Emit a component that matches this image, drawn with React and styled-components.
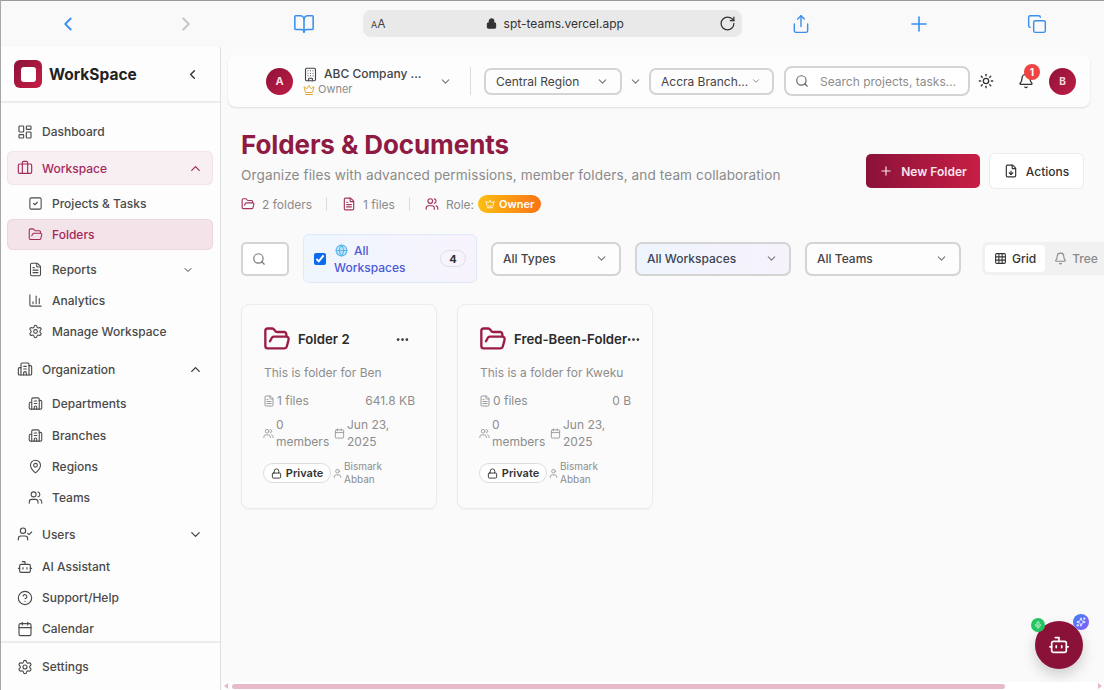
import React from 'react';
import styled, { createGlobalStyle } from 'styled-components';
import {
  Bell, BookOpen, Bot, Briefcase, Building, Building2, Calendar, ChartColumn, ChevronDown, ChevronLeft,
  ChevronRight, ChevronUp, CircleHelp, Copy, Crown, Ellipsis, FileDown, FileText, FolderOpen, Globe,
  Grid3x3, LayoutDashboard, Lock, MapPin, Mic, Plus, RotateCw, Search, Settings, Share, Sparkles, SquareCheck,
  Sun, User, UserCheck, Users,
} from 'lucide-react';

const Global = createGlobalStyle`
  * { box-sizing: border-box; }
  html, body { margin: 0; padding: 0; height: 100%; overflow: hidden; }
  body { font-family: Inter, "Liberation Sans", sans-serif; background: #fafafa; color: #333; }
`;

const Page = styled.div`
  position: relative;
  width: 1104px;
  height: 690px;
  display: flex;
  flex-direction: column;
  overflow: hidden;
  border-left: 1px solid #a8a8a8;
`;

const BrowserBar = styled.div`
  height: 47px;
  flex: none;
  display: grid;
  grid-template-columns: 118px 118px 118px 379px 118px 118px 118px;
  align-items: center;
  padding-left: 8px;
  background: #f9f9f9;
  border-top: 1px solid #9a9a9a;
`;

const BarSlot = styled.div`
  display: flex;
  justify-content: center;
  color: ${({ $off }) => ($off ? '#c4c4c4' : '#3a8fee')};
`;

const UrlBar = styled.div`
  height: 27px;
  margin-top: -1px;
  display: flex;
  align-items: center;
  justify-content: space-between;
  padding: 0 6px 0 8px;
  background: #e9e9e9;
  border-radius: 8px;
  font-size: 12px;
  color: #333;
`;

const AaText = styled.span`
  font-size: 12px;
  color: #444;
  & small { font-size: 9px; }
`;

const UrlText = styled.span`
  display: flex;
  align-items: center;
  gap: 7px;
  margin-left: 5px;
`;

const Body = styled.div`
  flex: 1;
  display: flex;
  min-height: 0;
`;

const Sidebar = styled.aside`
  width: 220px;
  flex: none;
  display: flex;
  flex-direction: column;
  background: #fdfdfd;
  border-right: 1px solid #dedede;
`;

const Brand = styled.div`
  height: 56px;
  flex: none;
  display: flex;
  align-items: center;
  padding: 0 20px 0 13px;
  border-bottom: 2px solid #ececec;
`;

const LogoMark = styled.div`
  width: 28px;
  height: 28px;
  flex: none;
  display: flex;
  align-items: center;
  justify-content: center;
  border-radius: 6px;
  background: linear-gradient(135deg, #8a1239, #c81e45);
  &::after {
    content: '';
    width: 15px;
    height: 15px;
    border-radius: 3px;
    background: #fff;
  }
`;

const BrandName = styled.div`
  flex: 1;
  margin-left: 7px;
  font-size: 15.5px;
  font-weight: 700;
  color: #222;
`;

const Nav = styled.nav`
  flex: 1;
  min-height: 0;
  overflow: hidden;
  padding: 13px 7px 0 6px;
  display: flex;
  flex-direction: column;
`;

const Item = styled.div`
  flex: none;
  display: flex;
  align-items: center;
  gap: 9px;
  height: ${({ $tall }) => ($tall ? '34px' : '31px')};
  margin-top: ${({ $mt }) => $mt || 0}px;
  padding-left: ${({ $sub }) => ($sub ? '21px' : '10px')};
  padding-right: ${({ $sub }) => ($sub ? '19px' : '10px')};
  border-radius: 6px;
  font-size: 12px;
  font-weight: 500;
  color: ${({ $active, $open }) => ($active || $open ? '#a5285a' : '#4a4a4a')};
  background: ${({ $active, $open }) => ($active ? '#f3e4e9' : $open ? '#f8eff2' : 'transparent')};
  box-shadow: ${({ $active, $open }) => ($active ? 'inset 0 0 0 1px #eed5dd' : $open ? 'inset 0 0 0 1px #f3e3e8' : 'none')};
  & > span { flex: 1; }
`;

const SidebarFooter = styled.div`
  height: 49px;
  flex: none;
  display: flex;
  align-items: center;
  padding-left: 6px;
  border-top: 2px solid #ececec;
`;

const Main = styled.main`
  flex: 1;
  min-width: 0;
  display: flex;
  flex-direction: column;
  background: #fafafa;
  padding: 8px 0 0 7px;
`;

const TopBar = styled.header`
  width: 862px;
  height: 52px;
  flex: none;
  display: flex;
  align-items: center;
  padding-left: 38px;
  background: #fdfdfd;
  border-radius: 8px;
  box-shadow: 0 1px 2px rgba(0, 0, 0, 0.12);
`;

const Avatar = styled.div`
  width: 27px;
  height: 27px;
  flex: none;
  display: flex;
  align-items: center;
  justify-content: center;
  border-radius: 50%;
  background: linear-gradient(135deg, #8f1239, #be1e45);
  color: #f6dbe3;
  font-size: ${({ $small }) => ($small ? '10px' : '11px')};
  font-weight: 700;
`;

const Company = styled.div`
  width: 136px;
  margin-left: 10px;
  flex: none;
`;

const CompanyName = styled.div`
  display: flex;
  align-items: center;
  gap: 6px;
  font-size: 12px;
  font-weight: 500;
  color: #444;
  line-height: 16px;
`;

const CompanyRole = styled.div`
  display: flex;
  align-items: center;
  gap: 3px;
  margin-top: 1px;
  font-size: 11px;
  color: #8b8b8b;
  line-height: 13px;
`;

const Divider = styled.div`
  width: 1px;
  height: 28px;
  margin: 0 13px 0 18px;
  background: #dcdcdc;
`;

const Select = styled.div`
  width: ${({ $w }) => $w}px;
  height: ${({ $h }) => $h || 27}px;
  flex: none;
  display: flex;
  align-items: center;
  justify-content: space-between;
  padding: 0 11px 0 10px;
  background: ${({ $tint }) => ($tint ? 'linear-gradient(90deg, #eff5fd, #f6f2fc)' : '#fdfdfd')};
  border: 2px solid #d4d4d4;
  border-radius: 7px;
  font-size: 12px;
  font-weight: ${({ $fw }) => $fw || 400};
  color: ${({ $tint }) => ($tint ? '#3a4454' : '#444')};
  white-space: nowrap;
`;

const LooseChevron = styled.div`
  width: 27px;
  flex: none;
  display: flex;
  justify-content: center;
  color: #777;
`;

const SearchBox = styled.div`
  width: 186px;
  height: 30px;
  margin-left: 10px;
  flex: none;
  display: flex;
  align-items: center;
  gap: 11px;
  padding-left: 9px;
  background: #fff;
  border: 2px solid #d4d4d4;
  border-radius: 8px;
  font-size: 12px;
  color: #8d8d8d;
  white-space: nowrap;
`;

const IconSlot = styled.div`
  position: relative;
  width: ${({ $w }) => $w}px;
  flex: none;
  display: flex;
  justify-content: center;
  color: #333;
`;

const RedBadge = styled.div`
  position: absolute;
  top: -9px;
  left: 22px;
  width: 16px;
  height: 16px;
  display: flex;
  align-items: center;
  justify-content: center;
  border-radius: 50%;
  background: #ef4444;
  color: #fff;
  font-size: 10px;
  font-weight: 700;
`;

const Content = styled.div`
  padding: 22px 0 0 13px;
`;

const HeadRow = styled.div`
  display: flex;
`;

const HeadText = styled.div`
  width: 625px;
  flex: none;
`;

const Title = styled.h1`
  margin: 0;
  font-size: 26px;
  line-height: 32px;
  font-weight: 700;
  color: #8f1a42;
  letter-spacing: -0.1px;
`;

const Subtitle = styled.p`
  margin: 4px 0 0;
  font-size: 13.6px;
  line-height: 20px;
  color: #8a8a8a;
  letter-spacing: 0.1px;
`;

const Meta = styled.div`
  display: flex;
  align-items: center;
  margin-top: 9px;
  height: 20px;
  font-size: 12px;
  color: #8a8a8a;
`;

const MetaItem = styled.div`
  display: flex;
  align-items: center;
  gap: 7px;
  color: #8a8a8a;
  & svg { color: #a5355f; }
`;

const MetaSep = styled.div`
  width: 1px;
  height: 14px;
  margin: 0 15px 0 14px;
  background: #dedede;
`;

const OwnerPill = styled.div`
  height: 18px;
  margin-left: 4px;
  display: flex;
  align-items: center;
  gap: 4px;
  padding: 0 7px;
  border-radius: 9px;
  background: linear-gradient(90deg, #fbbf12, #f97316);
  color: #fff;
  font-size: 11px;
  font-weight: 600;
`;

const HeadButtons = styled.div`
  display: flex;
  gap: 10px;
  margin-top: 25px;
`;

const PrimaryButton = styled.div`
  width: 114px;
  height: 34px;
  display: flex;
  align-items: center;
  justify-content: center;
  gap: 8px;
  border-radius: 5px;
  background: linear-gradient(90deg, #8a1239, #c81e45);
  color: #f8e6ec;
  font-size: 12px;
  font-weight: 600;
`;

const GhostButton = styled.div`
  width: 93px;
  height: 34px;
  display: flex;
  align-items: center;
  justify-content: center;
  gap: 8px;
  border-radius: 5px;
  background: #fff;
  box-shadow: 0 0 0 1px #ececec;
  color: #333;
  font-size: 12px;
  font-weight: 500;
`;

const Filters = styled.div`
  display: flex;
  align-items: center;
  margin-top: 20px;
  height: 49px;
`;

const SearchSquare = styled.div`
  width: 48px;
  height: 34px;
  flex: none;
  display: flex;
  align-items: center;
  padding-left: 9px;
  background: #fff;
  border: 2px solid #d4d4d4;
  border-radius: 5px;
  color: #777;
`;

const WorkspaceChip = styled.div`
  width: 174px;
  height: 49px;
  margin: 0 14px;
  flex: none;
  display: flex;
  align-items: center;
  padding: 0 10px;
  background: linear-gradient(90deg, #eff6fe, #f7f3fd);
  border: 1px solid #dde9fb;
  border-radius: 6px;
`;

const CheckBox = styled.input`
  width: 12px;
  height: 12px;
  margin: 0 8px 0 0;
  flex: none;
  accent-color: #0b6bef;
`;

const ChipLabel = styled.div`
  flex: 1;
  font-size: 12px;
  line-height: 17px;
  font-weight: 500;
  color: #4c58d8;
  & svg { color: #5ab6ee; fill: #bfe3f8; vertical-align: -2px; margin: 0 6px 0 1px; }
`;

const CountPill = styled.div`
  width: 26px;
  height: 17px;
  display: flex;
  align-items: center;
  justify-content: center;
  border: 1px solid #dedede;
  border-radius: 9px;
  font-size: 11px;
  font-weight: 700;
  color: #333;
`;

const SelectRow = styled.div`
  display: flex;
  gap: 14px;
`;

const ViewToggle = styled.div`
  display: flex;
  align-items: center;
  flex: none;
  width: 160px;
  height: 33px;
  margin-left: 21px;
  padding: 3px;
  background: #f1f1f1;
  border-radius: 6px;
`;

const ViewTab = styled.div`
  height: 27px;
  display: flex;
  align-items: center;
  gap: 5px;
  padding: 0 9px;
  border-radius: 4px;
  background: ${({ $on }) => ($on ? '#fff' : 'transparent')};
  color: ${({ $on }) => ($on ? '#333' : '#8a8a8a')};
  font-size: 12px;
  font-weight: 500;
`;

const Cards = styled.div`
  display: flex;
  gap: 20px;
  margin-top: 21px;
`;

const Card = styled.article`
  width: 196px;
  height: 205px;
  flex: none;
  padding: 21px 0 0 21px;
  background: #fbfbfb;
  border: 1px solid #ececec;
  border-radius: 8px;
  box-shadow: 0 1px 2px rgba(0, 0, 0, 0.04);
`;

const CardHead = styled.div`
  display: flex;
  align-items: center;
  height: 26px;
  color: #9c1c49;
`;

const CardTitle = styled.div`
  width: ${({ $w }) => $w}px;
  margin-left: 7px;
  flex: none;
  font-size: 13.2px;
  font-weight: 600;
  color: #2a2a2a;
  white-space: nowrap;
`;

const Dots = styled.div`
  color: #333;
  display: flex;
`;

const Desc = styled.div`
  margin-top: 13px;
  margin-left: 1px;
  font-size: 12px;
  line-height: 16px;
  color: #8d8d8d;
`;

const StatRow = styled.div`
  display: flex;
  align-items: center;
  justify-content: space-between;
  width: 152px;
  margin-top: 12px;
  font-size: 12px;
  line-height: 16px;
  color: #8d8d8d;
`;

const StatGroup = styled.div`
  display: flex;
  align-items: center;
  gap: 2px;
  & svg { color: #9a9a9a; flex: none; }
`;

const DetailRow = styled.div`
  display: flex;
  align-items: center;
  margin-top: 7px;
  font-size: 12px;
  line-height: 17px;
  color: #8d8d8d;
`;

const DetailBlock = styled.div`
  display: flex;
  align-items: center;
  gap: 2px;
  width: ${({ $w }) => $w}px;
  flex: none;
  & svg { color: #9a9a9a; flex: none; }
`;

const OwnerRow = styled.div`
  display: flex;
  align-items: center;
  margin-top: 10px;
`;

const PrivatePill = styled.div`
  width: 68px;
  height: 20px;
  flex: none;
  display: flex;
  align-items: center;
  justify-content: center;
  gap: 4px;
  background: #fff;
  border: 1px solid #dcdcdc;
  border-radius: 10px;
  font-size: 11px;
  font-weight: 600;
  color: #333;
`;

const CardOwner = styled.div`
  display: flex;
  align-items: center;
  gap: 1px;
  margin-left: 1px;
  font-size: 10px;
  line-height: 13px;
  color: #8d8d8d;
  & svg { color: #9a9a9a; flex: none; }
`;

const Fab = styled.div`
  position: absolute;
  right: 21px;
  bottom: 21px;
  width: 48px;
  height: 48px;
  display: flex;
  align-items: center;
  justify-content: center;
  border-radius: 50%;
  background: #8a1239;
  color: #fff;
  box-shadow: 0 6px 14px rgba(0, 0, 0, 0.18);
`;

const FabDot = styled.div`
  position: absolute;
  top: ${({ $top }) => $top}px;
  left: ${({ $left }) => $left}px;
  width: ${({ $size }) => $size}px;
  height: ${({ $size }) => $size}px;
  display: flex;
  align-items: center;
  justify-content: center;
  border-radius: 50%;
  background: ${({ $bg }) => $bg};
  color: #fff;
`;

const ScrollTrack = styled.div`
  position: absolute;
  left: 221px;
  right: 0;
  bottom: 0;
  height: 8px;
  display: flex;
  align-items: center;
  justify-content: space-between;
  padding: 0 2px;
  background: #fff;
`;

const ScrollThumb = styled.div`
  position: absolute;
  left: 10px;
  width: 773px;
  height: 5px;
  border-radius: 3px;
  background: #e8b9c7;
`;

const Arrow = styled.div`
  width: 0;
  height: 0;
  border-top: 3px solid transparent;
  border-bottom: 3px solid transparent;
  ${({ $right }) => ($right ? 'border-left: 4px solid #e8b9c7;' : 'border-right: 4px solid #e8b9c7;')}
`;

const nav = [
  { label: 'Dashboard', icon: LayoutDashboard, mt: 0 },
  { label: 'Workspace', icon: Briefcase, tall: true, open: true, mt: 4, chevron: 'up' },
  { label: 'Projects & Tasks', icon: SquareCheck, sub: true, mt: 3 },
  { label: 'Folders', icon: FolderOpen, sub: true, active: true },
  { label: 'Reports', icon: FileText, sub: true, mt: 4, chevron: 'down' },
  { label: 'Analytics', icon: ChartColumn, sub: true },
  { label: 'Manage Workspace', icon: Settings, sub: true },
  { label: 'Organization', icon: Building2, tall: true, mt: 5, chevron: 'up' },
  { label: 'Departments', icon: Building2, sub: true, mt: 2 },
  { label: 'Branches', icon: Building2, sub: true, mt: 1 },
  { label: 'Regions', icon: MapPin, sub: true },
  { label: 'Teams', icon: Users, sub: true },
  { label: 'Users', icon: UserCheck, tall: true, mt: 4, chevron: 'down' },
  { label: 'AI Assistant', icon: Bot },
  { label: 'Support/Help', icon: CircleHelp },
  { label: 'Calendar', icon: Calendar },
];

const folders = [
  { name: 'Folder 2', desc: 'This is folder for Ben', files: '1 files', size: '641.8 KB', titleW: 97 },
  { name: 'Fred-Been-Folder', desc: 'This is a folder for Kweku', files: '0 files', size: '0 B', titleW: 112 },
];

function FolderCard({ folder }) {
  return (
    <Card>
      <CardHead>
        <FolderOpen size={28} strokeWidth={2} />
        <CardTitle $w={folder.titleW}>{folder.name}</CardTitle>
        <Dots><Ellipsis size={15} strokeWidth={2.4} /></Dots>
      </CardHead>
      <Desc>{folder.desc}</Desc>
      <StatRow>
        <StatGroup><FileText size={12} />{folder.files}</StatGroup>
        <span>{folder.size}</span>
      </StatRow>
      <DetailRow>
        <DetailBlock $w={71}><Users size={11} /><span>0<br />members</span></DetailBlock>
        <DetailBlock $w={80}><Calendar size={11} /><span>Jun 23,<br />2025</span></DetailBlock>
      </DetailRow>
      <OwnerRow>
        <PrivatePill><Lock size={11} />Private</PrivatePill>
        <CardOwner><User size={11} /><span>Bismark<br />Abban</span></CardOwner>
      </OwnerRow>
    </Card>
  );
}

export default function App() {
  return (
    <>
      <Global />
      <Page>
        <BrowserBar>
          <BarSlot><ChevronLeft size={22} strokeWidth={2} /></BarSlot>
          <BarSlot $off><ChevronRight size={22} strokeWidth={2} /></BarSlot>
          <BarSlot><BookOpen size={22} strokeWidth={1.7} /></BarSlot>
          <UrlBar>
            <AaText><small>A</small>A</AaText>
            <UrlText><Lock size={11} strokeWidth={2.4} fill="currentColor" />spt-teams.vercel.app</UrlText>
            <RotateCw size={17} strokeWidth={1.8} />
          </UrlBar>
          <BarSlot><Share size={20} strokeWidth={1.7} /></BarSlot>
          <BarSlot><Plus size={24} strokeWidth={1.6} /></BarSlot>
          <BarSlot><Copy size={20} strokeWidth={1.7} /></BarSlot>
        </BrowserBar>
        <Body>
          <Sidebar>
            <Brand>
              <LogoMark />
              <BrandName>WorkSpace</BrandName>
              <ChevronLeft size={15} color="#333" strokeWidth={2.2} />
            </Brand>
            <Nav>
              {nav.map(({ label, icon: Icon, chevron, sub, tall, open, active, mt }) => (
                <Item key={label} $sub={sub} $tall={tall} $open={open} $active={active} $mt={mt}>
                  <Icon size={sub ? 15 : 16} strokeWidth={1.7} />
                  <span>{label}</span>
                  {chevron === 'up' && <ChevronUp size={sub ? 12 : 15} strokeWidth={2} color={open ? '#a5285a' : '#333'} />}
                  {chevron === 'down' && <ChevronDown size={sub ? 12 : 15} strokeWidth={2} color="#444" />}
                </Item>
              ))}
            </Nav>
            <SidebarFooter>
              <Item>
                <Settings size={16} strokeWidth={1.7} />
                <span>Settings</span>
              </Item>
            </SidebarFooter>
          </Sidebar>
          <Main>
            <TopBar>
              <Avatar>A</Avatar>
              <Company>
                <CompanyName><Building size={15} strokeWidth={1.8} />ABC Company ...</CompanyName>
                <CompanyRole><Crown size={12} color="#e0a93a" />Owner</CompanyRole>
              </Company>
              <ChevronDown size={13} color="#777" />
              <Divider />
              <Select $w={138}>Central Region<ChevronDown size={13} color="#777" /></Select>
              <LooseChevron><ChevronDown size={13} /></LooseChevron>
              <Select $w={125}>Accra Branch...<ChevronDown size={10} color="#777" /></Select>
              <SearchBox><Search size={14} color="#666" />Search projects, tasks...</SearchBox>
              <IconSlot $w={32}><Sun size={16} /></IconSlot>
              <IconSlot $w={47}>
                <Bell size={16} />
                <RedBadge>1</RedBadge>
              </IconSlot>
              <Avatar $small>B</Avatar>
            </TopBar>
            <Content>
              <HeadRow>
                <HeadText>
                  <Title>Folders &amp; Documents</Title>
                  <Subtitle>Organize files with advanced permissions, member folders, and team collaboration</Subtitle>
                  <Meta>
                    <MetaItem><FolderOpen size={14} />2 folders</MetaItem>
                    <MetaSep />
                    <MetaItem><FileText size={14} />1 files</MetaItem>
                    <MetaSep />
                    <MetaItem><Users size={14} />Role:</MetaItem>
                    <OwnerPill><Crown size={10} />Owner</OwnerPill>
                  </Meta>
                </HeadText>
                <HeadButtons>
                  <PrimaryButton><Plus size={14} />New Folder</PrimaryButton>
                  <GhostButton><FileDown size={14} />Actions</GhostButton>
                </HeadButtons>
              </HeadRow>
              <Filters>
                <SearchSquare><Search size={14} /></SearchSquare>
                <WorkspaceChip>
                  <CheckBox type="checkbox" defaultChecked />
                  <ChipLabel><Globe size={13} />All<br />Workspaces</ChipLabel>
                  <CountPill>4</CountPill>
                </WorkspaceChip>
                <SelectRow>
                  <Select $w={130} $h={34} $fw={500}>All Types<ChevronDown size={13} color="#777" /></Select>
                  <Select $w={156} $h={34} $fw={500} $tint>All Workspaces<ChevronDown size={13} color="#777" /></Select>
                  <Select $w={156} $h={34} $fw={500}>All Teams<ChevronDown size={13} color="#777" /></Select>
                </SelectRow>
                <ViewToggle>
                  <ViewTab $on><Grid3x3 size={13} color="#333" />Grid</ViewTab>
                  <ViewTab><Bell size={13} />Tree</ViewTab>
                </ViewToggle>
              </Filters>
              <Cards>
                {folders.map((f) => <FolderCard key={f.name} folder={f} />)}
              </Cards>
            </Content>
          </Main>
        </Body>
        <Fab>
          <Bot size={22} strokeWidth={1.8} />
          <FabDot $top={-3} $left={-4} $size={14} $bg="#22c55e"><Mic size={8} /></FabDot>
          <FabDot $top={-7} $left={38} $size={16} $bg="linear-gradient(135deg, #3b82f6, #8b5cf6)"><Sparkles size={10} /></FabDot>
        </Fab>
        <ScrollTrack>
          <Arrow />
          <ScrollThumb />
          <Arrow $right />
        </ScrollTrack>
      </Page>
    </>
  );
}
